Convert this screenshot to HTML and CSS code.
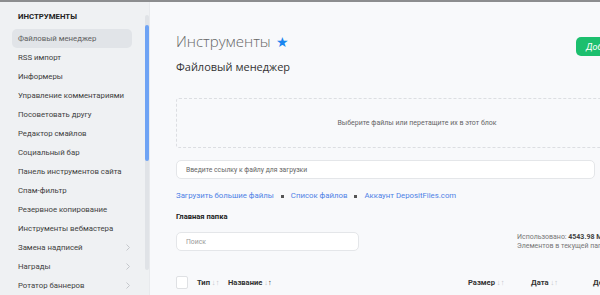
FILE: index.html
```html
<!DOCTYPE html>
<html lang="ru">
<head>
  <meta charset="UTF-8">
  <title>Файловый менеджер</title>
  <link rel="stylesheet" href="styles.css">
</head>
<body>
  <div class="topline"></div>
  <div class="layout">
    <aside class="sidebar">
      <nav class="menu">
        <div class="menu-title">ИНСТРУМЕНТЫ</div>
        <a class="menu-item active">Файловый менеджер</a>
        <a class="menu-item">RSS импорт</a>
        <a class="menu-item">Информеры</a>
        <a class="menu-item">Управление комментариями</a>
        <a class="menu-item">Посоветовать другу</a>
        <a class="menu-item">Редактор смайлов</a>
        <a class="menu-item">Социальный бар</a>
        <a class="menu-item">Панель инструментов сайта</a>
        <a class="menu-item">Спам-фильтр</a>
        <a class="menu-item">Резервное копирование</a>
        <a class="menu-item">Инструменты вебмастера</a>
        <a class="menu-item has-sub">Замена надписей
          <svg class="chev" width="4" height="7" viewBox="0 0 4 7"><polyline points="0.5,0.5 3.5,3.5 0.5,6.5" fill="none" stroke="#c4c7cb" stroke-width="1"/></svg>
        </a>
        <a class="menu-item has-sub">Награды
          <svg class="chev" width="4" height="7" viewBox="0 0 4 7"><polyline points="0.5,0.5 3.5,3.5 0.5,6.5" fill="none" stroke="#c4c7cb" stroke-width="1"/></svg>
        </a>
        <a class="menu-item has-sub">Ротатор баннеров
          <svg class="chev" width="4" height="7" viewBox="0 0 4 7"><polyline points="0.5,0.5 3.5,3.5 0.5,6.5" fill="none" stroke="#c4c7cb" stroke-width="1"/></svg>
        </a>
      </nav>
      <div class="scroll-track"><div class="scroll-thumb"></div></div>
    </aside>

    <main class="content">
      <div class="page-head">
        <div>
          <h1>Инструменты <span class="star">★</span></h1>
          <h2>Файловый менеджер</h2>
        </div>
        <button class="btn-green">Добавить папку</button>
      </div>

      <div class="dropzone">Выберите файлы или перетащите их в этот блок</div>

      <div class="url-row">
        <input class="field url-field" placeholder="Введите ссылку к файлу для загрузки">
      </div>

      <div class="links">
        <a>Загрузить большие файлы</a>
        <span class="dot"></span>
        <a>Список файлов</a>
        <span class="dot"></span>
        <a>Аккаунт DepositFiles.com</a>
      </div>

      <div class="folder">Главная папка</div>

      <div class="search-row">
        <input class="field search-field" placeholder="Поиск">
        <div class="stats">
          <div>Использовано: <b>4543.98 MB</b> из 10240 MB</div>
          <div>Элементов в текущей папке: 38</div>
        </div>
      </div>

      <div class="table-head">
        <span class="check"></span>
        <span class="col col-type">Тип <i>↓↑</i></span>
        <span class="col col-name">Название <i>↓<em>↑</em></i></span>
        <span class="col col-size">Размер <i>↓↑</i></span>
        <span class="col col-date">Дата <i>↓↑</i></span>
        <span class="col">Действия</span>
      </div>
    </main>
  </div>
</body>
</html>
```

FILE: styles.css
```css
* { box-sizing: border-box; }
html, body {
  margin: 0;
  height: 100%;
}
body {
  font-family: Roboto, "Noto Sans", sans-serif;
  color: #333;
  background: #f8f9fb;
  overflow: hidden;
}
.topline {
  height: 2px;
  background: #8c8d8f;
}
.layout {
  display: flex;
  height: calc(100% - 2px);
}

/* sidebar */
.sidebar {
  display: flex;
  width: 150px;
  flex-shrink: 0;
  background: #eff1f3;
  border-right: 1px solid #e8eaed;
}
.menu {
  width: 146px;
  padding: 9px 13px 0 12px;
}
.menu-title {
  font-size: 7.8px;
  font-weight: 700;
  line-height: 12px;
  color: #222;
  padding-left: 6px;
  margin-bottom: 6px;
}
.menu-item {
  display: flex;
  align-items: center;
  justify-content: space-between;
  height: 19px;
  padding: 0 2px 0 6px;
  font-size: 7.8px;
  color: #3f3f3f;
  border-radius: 5px;
  white-space: nowrap;
}
.menu-item.active {
  background: #e1e4e8;
  color: #606060;
}
.scroll-track {
  width: 4px;
  margin-top: 13px;
  background: #e0e3e7;
  height: 255px;
  border-radius: 2px;
}
.scroll-thumb {
  margin-top: 10px;
  height: 136px;
  background: #6ea3f4;
  border-radius: 2px;
}

/* content */
.content {
  flex: 1;
  overflow: hidden;
  padding: 28px 0 0 26px;
}
.content > * {
  width: 482px;
}
.page-head {
  display: flex;
  justify-content: space-between;
  align-items: flex-start;
}
h1 {
  margin: 0;
  font-family: "Open Sans", sans-serif;
  font-weight: 300;
  font-size: 15px;
  line-height: 22px;
  color: #666;
}
.star {
  color: #1a86f0;
  font-size: 14px;
  margin-left: 1px;
}
h2 {
  margin: 6px 0 0;
  font-family: "Open Sans", sans-serif;
  font-weight: 400;
  font-size: 11px;
  line-height: 16px;
  color: #333;
}
.btn-green {
  margin-top: 7px;
  width: 82px;
  height: 19px;
  border: 0;
  border-radius: 5px;
  background: #1cbf6e;
  color: #fff;
  font-family: inherit;
  font-size: 9px;
  font-style: italic;
  text-align: left;
  padding: 0 0 0 10px;
}
.dropzone {
  margin-top: 23px;
  height: 50px;
  border: 1px dashed #dcdee2;
  border-radius: 3px;
  display: flex;
  align-items: center;
  justify-content: center;
  font-size: 7px;
  color: #666;
}
.url-row {
  margin-top: 12px;
}
.field {
  display: block;
  height: 19px;
  border: 1px solid #e4e6e9;
  border-radius: 5px;
  background: #fff;
  font-family: inherit;
  font-size: 6.8px;
  padding: 0 9px;
  color: #333;
}
.field::placeholder { color: #666; }
.url-field { width: 419px; }
.links {
  margin-top: 11px;
  display: flex;
  align-items: center;
  gap: 7px;
  font-size: 7.8px;
  line-height: 12px;
}
.links a { color: #4f82e6; }
.dot {
  width: 3px;
  height: 3px;
  background: #555;
}
.folder {
  margin-top: 10px;
  font-size: 7.6px;
  font-weight: 700;
  color: #222;
}
.search-row {
  margin-top: 11px;
  display: flex;
  justify-content: space-between;
  align-items: center;
}
.search-field { width: 183px; }
.search-field::placeholder { color: #999; }
.stats {
  width: 141px;
  font-size: 7px;
  line-height: 9px;
  color: #777;
  white-space: nowrap;
}
.stats b { color: #444; }
.table-head {
  margin-top: 25px;
  display: flex;
  align-items: center;
  font-size: 7.6px;
  font-weight: 700;
  color: #333;
}
.check {
  width: 12px;
  height: 13px;
  border: 1px solid #dfe1e4;
  border-radius: 2px;
  background: #fff;
  margin-right: 9px;
}
.col i {
  font-style: normal;
  font-weight: 400;
  color: #c3c6ca;
}
.col em {
  font-style: normal;
  font-weight: 700;
  color: #333;
}
.col-type { width: 31px; }
.col-name { width: 240px; }
.col-size { width: 63px; }
.col-date { width: 62px; }
```
